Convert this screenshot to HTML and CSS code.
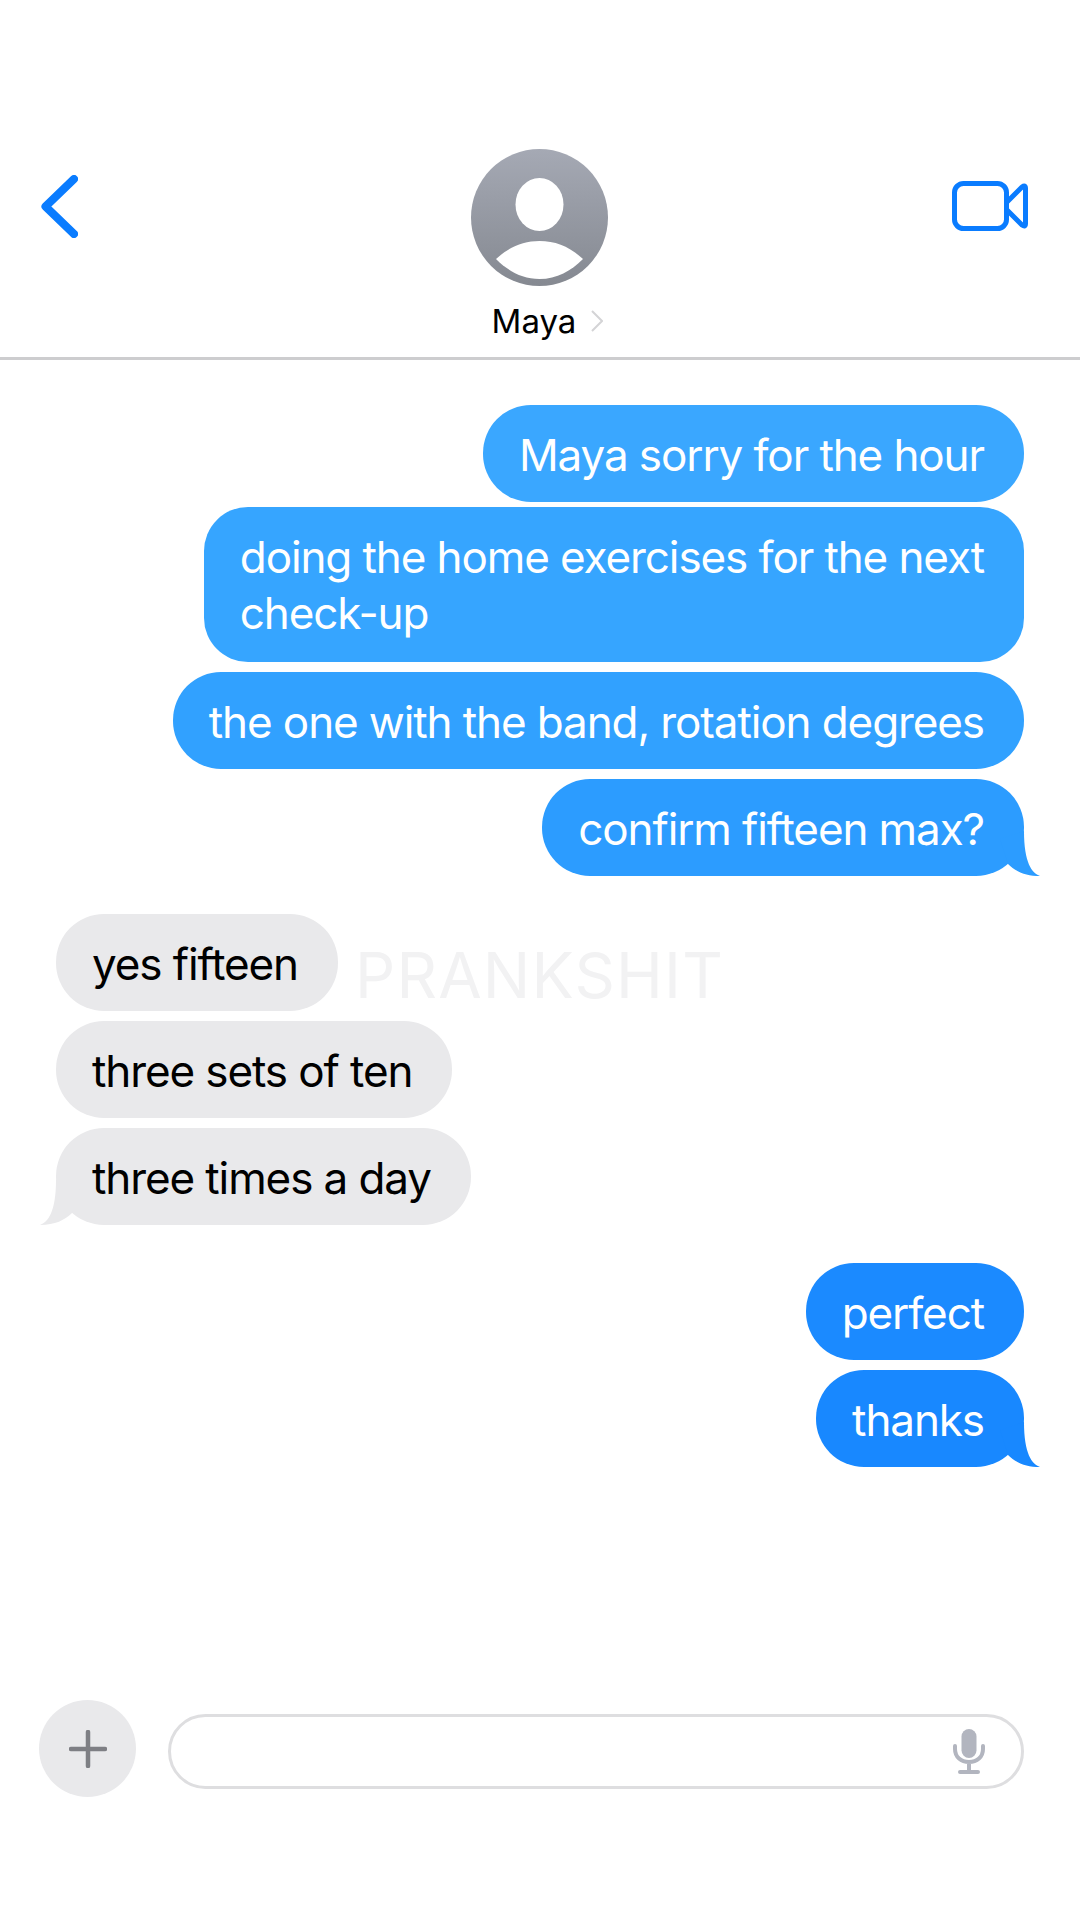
FILE: index.html
```html
<!DOCTYPE html>
<html lang="en">
<head>
<meta charset="utf-8">
<title>Maya</title>
<link rel="stylesheet" href="styles.css">
</head>
<body>
<div class="app">
  <header class="header">
    <svg class="back" viewBox="0 0 37 63"><path d="M33 4 L4.500 31.500 L33 59" /></svg>
    <div class="contact">
      <svg class="avatar" viewBox="0 0 137 137">
        <defs><linearGradient id="av" x1="0" y1="0" x2="0" y2="1"><stop offset="0" stop-color="#a5a9b4"/><stop offset="1" stop-color="#858991"/></linearGradient></defs>
        <circle cx="68.500" cy="68.500" r="68.500" fill="url(#av)"/>
        <ellipse cx="68.500" cy="55.500" rx="24" ry="26.500" fill="#fff"/>
        <path d="M25 110 C38 98 52 92 68.500 92 C85 92 99 98 112 110 C100 122 86 130 68.500 130 C51 130 37 122 25 110 Z" fill="#fff"/>
      </svg>
      <div class="name-row">
        <span class="name">Maya</span>
        <svg class="chev" viewBox="0 0 12 22"><path d="M1 1 L11 11 L1 21"/></svg>
      </div>
    </div>
    <svg class="video" viewBox="0 0 76 50"><rect x="2.500" y="2.500" width="52" height="45" rx="9"/><path d="M55 21 L70 6 Q73.500 3.500 73.500 7.500 L73.500 42.500 Q73.500 46.500 70 44 L55 29"/></svg>
  </header>

  <main class="thread">
    <div class="group">
      <div class="bubble out c1">Maya sorry for the hour</div>
      <div class="bubble out c2 multi">doing the home exercises for the next<br>check-up</div>
      <div class="bubble out c3">the one with the band, rotation degrees</div>
      <div class="bubble out c4">confirm fifteen max?<svg class="tail tail-r" viewBox="0 0 60 57"><path d="M28 45 C35 52 45 57 60 57 C52 54 44 44 44 12 L20 20 Z"/></svg></div>
    </div>
    <div class="group">
      <div class="bubble in">yes fifteen</div>
      <div class="bubble in">three sets of ten</div>
      <div class="bubble in">three times a day<svg class="tail tail-l" viewBox="0 0 60 57"><path d="M32 45 C25 52 15 57 0 57 C8 54 16 44 16 12 L40 20 Z"/></svg></div>
    </div>
    <div class="group">
      <div class="bubble out c5">perfect</div>
      <div class="bubble out c6">thanks<svg class="tail tail-r" viewBox="0 0 60 57"><path d="M28 45 C35 52 45 57 60 57 C52 54 44 44 44 12 L20 20 Z"/></svg></div>
    </div>
    <div class="watermark">PRANKSHIT</div>
  </main>

  <footer class="composer">
    <div class="plus"><svg viewBox="0 0 38 38"><path d="M19 2 V36 M2 19 H36"/></svg></div>
    <div class="field">
      <svg class="mic" viewBox="0 0 32 45"><rect x="8.500" y="0" width="15" height="29" rx="7.500" class="mic-body"/><path d="M2 17 V20 C2 28 8 33 16 33 C24 33 30 28 30 20 V17 M16 33 V43 M7 43 H25" class="mic-line"/></svg>
    </div>
  </footer>
</div>
</body>
</html>
```
FILE: styles.css
```css
* { box-sizing: border-box; }
html, body { margin: 0; padding: 0; background: #fff; }
body { font-family: Inter, "Liberation Sans", sans-serif; }

.app {
  width: 1080px;
  height: 1920px;
  display: flex;
  flex-direction: column;
  overflow: hidden;
}

.header {
  height: 360px;
  padding: 149px 52px 0 41px;
  display: grid;
  grid-template-columns: 1fr auto 1fr;
  align-items: start;
  border-bottom: 3px solid #cdcdcf;
}
.back {
  width: 37px;
  height: 63px;
  margin-top: 26px;
  fill: none;
  stroke: #0a7cff;
  stroke-width: 8;
  stroke-linecap: round;
  stroke-linejoin: round;
}
.contact {
  display: flex;
  flex-direction: column;
  align-items: center;
  position: relative;
  left: 5px;
}
.avatar { width: 137px; height: 137px; display: block; }
.name-row {
  display: flex;
  align-items: center;
  gap: 15px;
  margin-top: 15px;
  margin-left: 16px;
}
.name { font-size: 33px; line-height: 40px; color: #000; }
.chev {
  width: 12px;
  height: 22px;
  fill: none;
  stroke: #d4d4d6;
  stroke-width: 2;
}
.video {
  justify-self: end;
  width: 76px;
  height: 50px;
  margin-top: 32px;
  fill: none;
  stroke: #0a7cff;
  stroke-width: 5;
  stroke-linejoin: round;
}

.thread {
  flex: 1;
  position: relative;
  padding: 45px 56px 0;
  display: flex;
  flex-direction: column;
  gap: 38px;
}
.group {
  display: flex;
  flex-direction: column;
  gap: 10px;
}
.bubble {
  position: relative;
  align-self: flex-start;
  padding: 22px 40px 19px 36px;
  border-radius: 48px;
  font-size: 44px;
  line-height: 56px;
  letter-spacing: -1.1px;
  white-space: nowrap;
}
.multi { border-radius: 44px; margin-top: -5px; padding-bottom: 21px; }
.out { align-self: flex-end; color: #fff; }
.in { background: #e9e9eb; color: #000; }
.in .tail { fill: #e9e9eb; }

.c1 { background: #3aa7ff; }
.c2 { background: #36a5ff; }
.c3 { background: #31a1ff; }
.c4 { background: #2c9cff; }
.c4 .tail { fill: #2c9cff; }
.c5 { background: #1b8aff; }
.c6 { background: #1888ff; }
.c6 .tail { fill: #1888ff; }

.tail {
  position: absolute;
  bottom: 0;
  width: 60px;
  height: 57px;
}
.tail-r { right: -16px; }
.tail-l { left: -16px; }

.watermark {
  position: absolute;
  left: 355px;
  top: 577px;
  font-size: 63px;
  line-height: 76px;
  letter-spacing: 1.2px;
  color: #f2f2f3;
  white-space: nowrap;
}

.composer {
  display: flex;
  align-items: flex-start;
  gap: 32px;
  padding: 0 56px 123px 39px;
}
.plus {
  width: 97px;
  height: 97px;
  flex: none;
  border-radius: 50%;
  background: #e9e9eb;
  display: flex;
  align-items: center;
  justify-content: center;
}
.plus svg {
  width: 38px;
  height: 38px;
  fill: none;
  stroke: #7e7f84;
  stroke-width: 4.500;
  stroke-linecap: round;
}
.field {
  flex: 1;
  height: 75px;
  margin-top: 14px;
  border: 3px solid #dedee0;
  border-radius: 38px;
  display: flex;
  align-items: center;
  justify-content: flex-end;
  padding-right: 36px;
}
.mic { width: 32px; height: 45px; }
.mic-body { fill: #b2b5bf; }
.mic-line {
  fill: none;
  stroke: #b2b5bf;
  stroke-width: 4;
  stroke-linecap: round;
}
```
